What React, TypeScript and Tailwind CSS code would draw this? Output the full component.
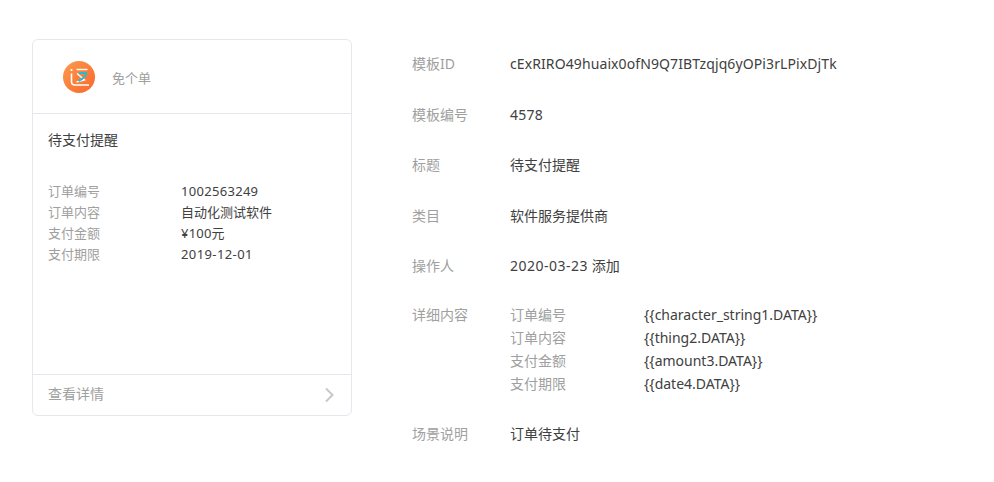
const card = [
  ["订单编号", "1002563249", "tracking-[0.3px]"],
  ["订单内容", "自动化测试软件", ""],
  ["支付金额", "¥100元", "tracking-[0.2px]"],
  ["支付期限", "2019-12-01", "tracking-[0.4px]"],
];

const detail = [
  ["订单编号", "{{character_string1.DATA}}"],
  ["订单内容", "{{thing2.DATA}}"],
  ["支付金额", "{{amount3.DATA}}"],
  ["支付期限", "{{date4.DATA}}"],
];

function Logo() {
  return (
    <svg width="32" height="32" viewBox="0 0 32 32" className="shrink-0">
      <defs>
        <linearGradient id="logoBg" x1="0" y1="0" x2="1" y2="1">
          <stop offset="0" stopColor="#fb9a4b" />
          <stop offset="1" stopColor="#f9672d" />
        </linearGradient>
      </defs>
      <circle cx="16" cy="16" r="16" fill="url(#logoBg)" />
      <path d="M8.5 8v2" stroke="#fff" strokeWidth="1.8" fill="none" />
      <path d="M8.5 12.5v8c0 2.2 1.3 3.5 3.5 3.5h14" stroke="#fff" strokeWidth="1.6" fill="none" />
      <path d="M13.5 8.5h11" stroke="#fff" strokeWidth="1.4" fill="none" />
      <path d="M14 12.5l7.5 6.5-8 2" stroke="#fff" strokeWidth="1.4" fill="none" />
      <path d="M16 12h7c.4 2.5-2.5 5.5-7.5 8" stroke="#22bcd8" strokeWidth="2" fill="none" />
    </svg>
  );
}

function Row({ label, mt, children }: { label: string; mt?: string; children: React.ReactNode }) {
  return (
    <div className={`flex items-start ${mt ?? ""}`}>
      <div className="w-[98px] shrink-0 text-[#a0a0a0]">{label}</div>
      <div className="text-[#404040]">{children}</div>
    </div>
  );
}

export default function App() {
  return (
    <div className="w-[994px] h-[482px] bg-white flex items-start pl-8 pt-[39px] text-sm font-['Noto_Sans','Noto_Sans_CJK_SC',sans-serif] overflow-hidden">
      <div className="w-[320px] h-[377px] shrink-0 flex flex-col border border-[#e4e7eb] rounded-md">
        <div className="h-[74px] flex items-center pl-[30px] border-b border-[#e4e7eb]">
          <Logo />
          <span className="ml-[17px] pt-[3px] text-[13px] text-[#a0a0a0]">免个单</span>
        </div>
        <div className="flex-1 px-[15px] text-[13px]">
          <div className="mt-[14px] leading-[24px] text-sm text-[#404040]">待支付提醒</div>
          <div className="mt-[29.4px]">
            {card.map(([k, v, t]) => (
              <div key={k} className="flex h-[20.7px] items-center">
                <div className="w-[133px] text-[#a0a0a0]">{k}</div>
                <div className={`text-[#404040] ${t}`}>{v}</div>
              </div>
            ))}
          </div>
        </div>
        <div className="h-[41px] flex items-center justify-between px-[15px] pb-[2px] border-t border-[#e4e7eb] text-[#a0a0a0]">
          <span>查看详情</span>
          <svg width="12" height="16" viewBox="0 0 12 16" fill="none" stroke="#c8c8c8" strokeWidth="2" className="mt-[2px]">
            <path d="M2 1.5l6.5 6.5-6.5 6.5" />
          </svg>
        </div>
      </div>

      <div className="ml-[60px] mt-[14px] leading-[21px]">
        <Row label="模板ID"><span className="tracking-[0.1px]">cExRIRO49huaix0ofN9Q7IBTzqjq6yOPi3rLPixDjTk</span></Row>
        <Row label="模板编号" mt="mt-[30px]"><span className="tracking-[0.25px]">4578</span></Row>
        <Row label="标题" mt="mt-[29px]">待支付提醒</Row>
        <Row label="类目" mt="mt-[30px]">软件服务提供商</Row>
        <Row label="操作人" mt="mt-[29px]"><span className="tracking-[0.5px]">2020-03-23</span> 添加</Row>
        <Row label="详细内容" mt="mt-[28px]">
          <div className="flex flex-col">
            {detail.map(([k, v]) => (
              <div key={k} className="flex h-[23px] items-start">
                <div className="w-[134px] text-[#a0a0a0]">{k}</div>
                <div>{v}</div>
              </div>
            ))}
          </div>
        </Row>
        <Row label="场景说明" mt="mt-[27px]">订单待支付</Row>
      </div>
    </div>
  );
}
